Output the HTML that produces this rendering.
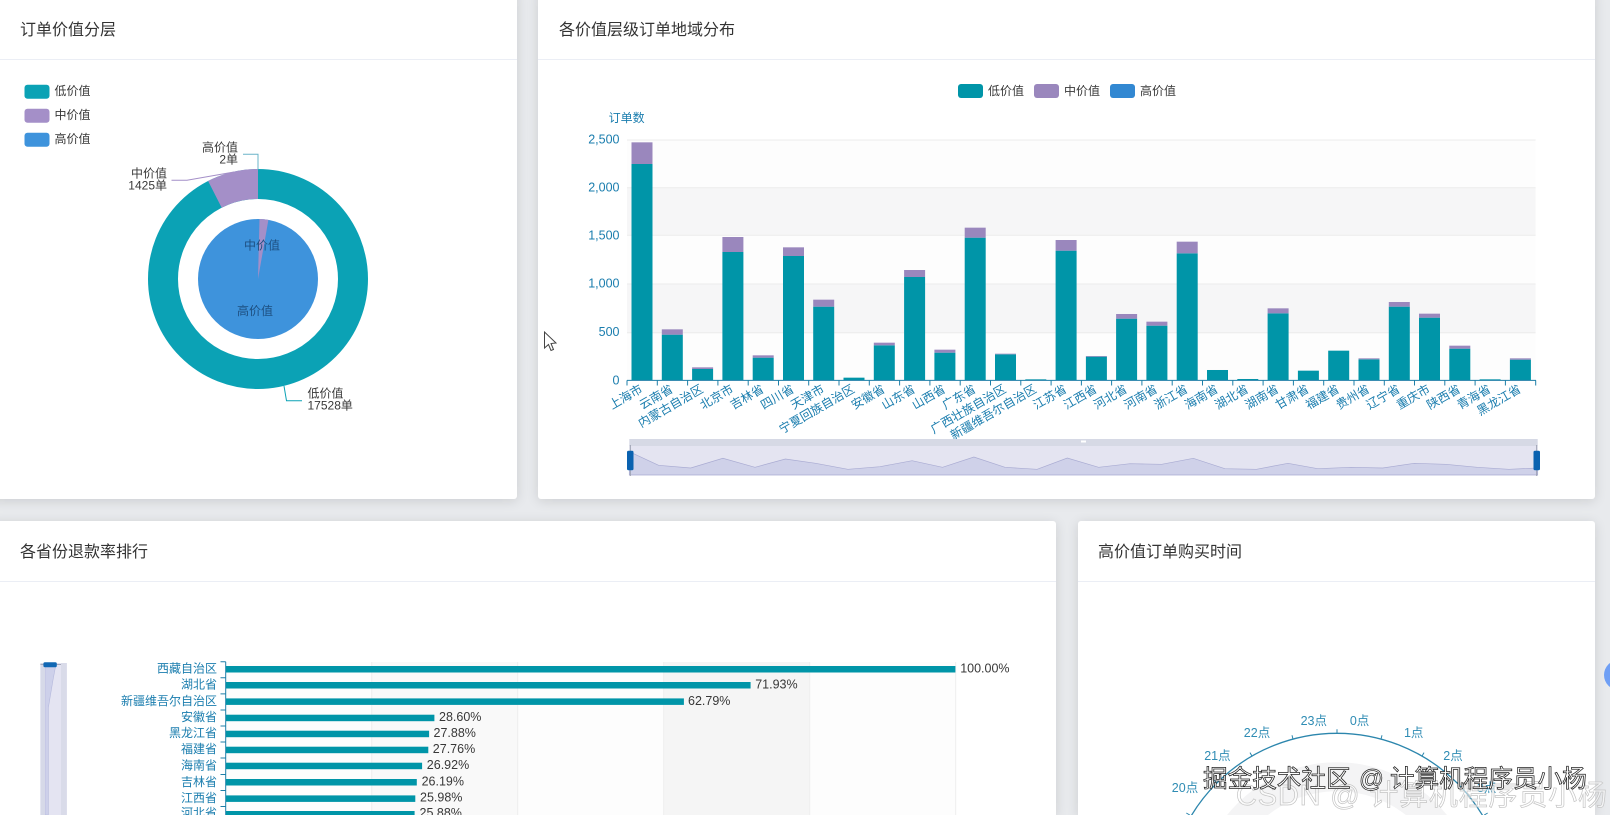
<!DOCTYPE html>
<html lang="zh">
<head>
<meta charset="utf-8">
<title>订单价值分析</title>
<style>
html,body{margin:0;padding:0;width:1610px;height:815px;overflow:hidden;background:#e8eaed;font-family:"Liberation Sans","Noto Sans CJK SC",sans-serif;}
#stage{position:relative;width:1610px;height:815px;overflow:hidden;}
.card{position:absolute;background:#fff;border-radius:3px;box-shadow:0 2px 12px rgba(0,0,0,.12);overflow:hidden;}
.card.low{border-radius:3px 3px 0 0;}
.card .hd{position:absolute;left:0;right:0;border-bottom:1px solid #ebeef5;}
.card h3{position:absolute;margin:0;font-weight:400;font-size:16px;line-height:22px;color:#333;white-space:nowrap;}
svg{position:absolute;left:0;top:0;filter:blur(.3px);}
text{font-family:"Liberation Sans","Noto Sans CJK SC",sans-serif;font-size:12px;}
.b{fill:#1a7dae;}
.d{fill:#383838;}
.n{font-size:12.5px;}
.x text{font-size:12.1px;}
</style>
</head>
<body>
<div id="stage">
<div class="card" style="left:-10px;top:-10px;width:526.5px;height:509px;"><div class="hd" style="top:0;height:69px;"></div><h3 style="left:30px;top:30px;">订单价值分层</h3></div>
<div class="card" style="left:538px;top:-10px;width:1057px;height:509px;"><div class="hd" style="top:0;height:69px;"></div><h3 style="left:21px;top:30px;">各价值层级订单地域分布</h3></div>
<div class="card low" style="left:-10px;top:521px;width:1066px;height:294px;"><div class="hd" style="top:0;height:60px;"></div><h3 style="left:30px;top:21px;">各省份退款率排行</h3></div>
<div class="card low" style="left:1078px;top:521px;width:517px;height:294px;"><div class="hd" style="top:0;height:60px;"></div><h3 style="left:20px;top:21px;">高价值订单购买时间</h3></div>

<svg width="1610" height="815" viewBox="0 0 1610 815" xmlns="http://www.w3.org/2000/svg">
<!-- donut legend -->
<rect x="24.5" y="84.7" width="25" height="14" rx="3" fill="#0ba2b5"/>
<rect x="24.5" y="108.7" width="25" height="14" rx="3" fill="#a48fc8"/>
<rect x="24.5" y="132.7" width="25" height="14" rx="3" fill="#3e93dc"/>
<text x="54.5" y="95" class="d">低价值</text>
<text x="54.5" y="119" class="d">中价值</text>
<text x="54.5" y="143" class="d">高价值</text>
<!-- donut -->
<circle cx="258" cy="279" r="95" fill="none" stroke="#0ba2b5" stroke-width="30"/>
<path d="M258 169A110 110 0 0 0 208.1 181L221.7 207.7A80 80 0 0 1 258 199Z" fill="#a48fc8"/>
<circle cx="258" cy="279" r="60" fill="#3e93dc"/>
<path d="M258 279L259.5 219A60 60 0 0 1 268.4 219.9Z" fill="#a48fc8"/>
<path d="M243 154.3H258V169.5" fill="none" stroke="#6ab4c8" stroke-width="1"/>
<path d="M171.5 180.3H187L234 172" fill="none" stroke="#a48fc8" stroke-width="1"/>
<path d="M284 386L286.5 400.7H302" fill="none" stroke="#0ba2b5" stroke-width="1"/>
<text x="238" y="151.5" text-anchor="end" class="d">高价值</text>
<text x="238" y="163.7" text-anchor="end" class="d">2单</text>
<text x="167" y="177.5" text-anchor="end" class="d">中价值</text>
<text x="167" y="189.7" text-anchor="end" class="d">1425单</text>
<text x="307.5" y="397.5" class="d">低价值</text>
<text x="307.5" y="409.7" class="d">17528单</text>
<text x="262" y="249.3" text-anchor="middle" fill="#1d4f80">中价值</text>
<text x="255" y="315" text-anchor="middle" fill="#1d4f80">高价值</text>

<!-- cursor -->
<path d="M544.5 332V348L548.5 344.5L551 350.5L553.5 349.5L551 343.5L556 343Z" fill="#fff" stroke="#444" stroke-width="1"/>

<!-- bar legend -->
<rect x="958" y="84" width="25" height="14" rx="3" fill="#0095a8"/>
<rect x="1034" y="84" width="25" height="14" rx="3" fill="#9a87bd"/>
<rect x="1110" y="84" width="25" height="14" rx="3" fill="#3288d2"/>
<text x="988" y="95" class="d">低价值</text>
<text x="1064" y="95" class="d">中价值</text>
<text x="1140" y="95" class="d">高价值</text>
<text x="608.6" y="122" class="b">订单数</text>

<!-- split area + grid -->
<rect x="627" y="140" width="908.6" height="240.4" fill="#fdfdfd"/>
<rect x="627" y="187.7" width="908.6" height="47.6" fill="#f6f6f7"/>
<rect x="627" y="284" width="908.6" height="48.7" fill="#f6f6f7"/>
<path d="M627 140H1535.6M627 187.7H1535.6M627 235.3H1535.6M627 284H1535.6M627 332.7H1535.6" stroke="#ececec" stroke-width="1" fill="none"/>
<g class="b" text-anchor="end">
<text class="n" x="619.5" y="143.5">2,500</text>
<text class="n" x="619.5" y="191.5">2,000</text>
<text class="n" x="619.5" y="239.5">1,500</text>
<text class="n" x="619.5" y="287.5">1,000</text>
<text class="n" x="619.5" y="336">500</text>
<text class="n" x="619.5" y="384.5">0</text>
</g>

<!-- bars -->
<g transform="translate(0,60) scale(1,.33333)" fill="#0095a8">
<rect x="631.5" y="312" width="21" height="649"/><rect x="661.8" y="824" width="21" height="137"/><rect x="692.1" y="927" width="21" height="34"/><rect x="722.4" y="576" width="21" height="385"/><rect x="752.7" y="893" width="21" height="68"/><rect x="783" y="588" width="21" height="373"/><rect x="813.2" y="740" width="21" height="221"/><rect x="843.5" y="953" width="21" height="8"/><rect x="873.8" y="856" width="21" height="105"/><rect x="904.1" y="651" width="21" height="310"/><rect x="934.4" y="878" width="21" height="83"/><rect x="964.7" y="533" width="21" height="428"/><rect x="995" y="883" width="21" height="78"/><rect x="1025.3" y="958" width="21" height="3"/><rect x="1055.6" y="572" width="21" height="389"/><rect x="1085.9" y="890" width="21" height="71"/><rect x="1116.1" y="776" width="21" height="185"/><rect x="1146.4" y="797" width="21" height="164"/><rect x="1176.7" y="580" width="21" height="381"/><rect x="1207" y="930" width="21" height="31"/><rect x="1237.3" y="957" width="21" height="4"/><rect x="1267.6" y="760" width="21" height="201"/><rect x="1297.9" y="932" width="21" height="29"/><rect x="1328.2" y="872" width="21" height="89"/><rect x="1358.5" y="898" width="21" height="63"/><rect x="1388.8" y="740" width="21" height="221"/><rect x="1419" y="773" width="21" height="188"/><rect x="1449.3" y="866" width="21" height="95"/><rect x="1479.6" y="958" width="21" height="3"/><rect x="1509.9" y="899" width="21" height="62"/>
</g>
<g transform="translate(0,60) scale(1,.33333)" fill="#9a87bd">
<rect x="631.5" y="247" width="21" height="65"/><rect x="661.8" y="808" width="21" height="16"/><rect x="692.1" y="922" width="21" height="5"/><rect x="722.4" y="531" width="21" height="45"/><rect x="752.7" y="886" width="21" height="7"/><rect x="783" y="562" width="21" height="26"/><rect x="813.2" y="719" width="21" height="21"/><rect x="873.8" y="848" width="21" height="8"/><rect x="904.1" y="630" width="21" height="21"/><rect x="934.4" y="869" width="21" height="9"/><rect x="964.7" y="503" width="21" height="30"/><rect x="995" y="881" width="21" height="2"/><rect x="1055.6" y="540" width="21" height="32"/><rect x="1085.9" y="888" width="21" height="2"/><rect x="1116.1" y="762" width="21" height="14"/><rect x="1146.4" y="785" width="21" height="12"/><rect x="1176.7" y="545" width="21" height="35"/><rect x="1267.6" y="745" width="21" height="15"/><rect x="1358.5" y="895" width="21" height="3"/><rect x="1388.8" y="726" width="21" height="14"/><rect x="1419" y="761" width="21" height="12"/><rect x="1449.3" y="857" width="21" height="9"/><rect x="1509.9" y="895" width="21" height="4"/>
</g>
<!-- x axis -->
<path d="M627 380.4H1536M627 380.4V385.5M657.3 380.4V385.5M687.6 380.4V385.5M717.9 380.4V385.5M748.2 380.4V385.5M778.5 380.4V385.5M808.7 380.4V385.5M839 380.4V385.5M869.3 380.4V385.5M899.6 380.4V385.5M929.9 380.4V385.5M960.2 380.4V385.5M990.5 380.4V385.5M1020.8 380.4V385.5M1051.1 380.4V385.5M1081.4 380.4V385.5M1111.6 380.4V385.5M1141.9 380.4V385.5M1172.2 380.4V385.5M1202.5 380.4V385.5M1232.8 380.4V385.5M1263.1 380.4V385.5M1293.4 380.4V385.5M1323.7 380.4V385.5M1354 380.4V385.5M1384.3 380.4V385.5M1414.5 380.4V385.5M1444.8 380.4V385.5M1475.1 380.4V385.5M1505.4 380.4V385.5M1535.7 380.4V385.5" stroke="#1e7fa8" stroke-width="1" fill="none"/>
<g class="b x" text-anchor="end">
<text transform="translate(643.5,391.5) rotate(-30)">上海市</text>
<text transform="translate(673.8,391.5) rotate(-30)">云南省</text>
<text transform="translate(704.1,391.5) rotate(-30)">内蒙古自治区</text>
<text transform="translate(734.4,391.5) rotate(-30)">北京市</text>
<text transform="translate(764.7,391.5) rotate(-30)">吉林省</text>
<text transform="translate(795,391.5) rotate(-30)">四川省</text>
<text transform="translate(825.2,391.5) rotate(-30)">天津市</text>
<text transform="translate(855.5,391.5) rotate(-30)">宁夏回族自治区</text>
<text transform="translate(885.8,391.5) rotate(-30)">安徽省</text>
<text transform="translate(916.1,391.5) rotate(-30)">山东省</text>
<text transform="translate(946.4,391.5) rotate(-30)">山西省</text>
<text transform="translate(976.7,391.5) rotate(-30)">广东省</text>
<text transform="translate(1007,391.5) rotate(-30)">广西壮族自治区</text>
<text transform="translate(1037.3,391.5) rotate(-30)">新疆维吾尔自治区</text>
<text transform="translate(1067.6,391.5) rotate(-30)">江苏省</text>
<text transform="translate(1097.9,391.5) rotate(-30)">江西省</text>
<text transform="translate(1128.1,391.5) rotate(-30)">河北省</text>
<text transform="translate(1158.4,391.5) rotate(-30)">河南省</text>
<text transform="translate(1188.7,391.5) rotate(-30)">浙江省</text>
<text transform="translate(1219,391.5) rotate(-30)">海南省</text>
<text transform="translate(1249.3,391.5) rotate(-30)">湖北省</text>
<text transform="translate(1279.6,391.5) rotate(-30)">湖南省</text>
<text transform="translate(1309.9,391.5) rotate(-30)">甘肃省</text>
<text transform="translate(1340.2,391.5) rotate(-30)">福建省</text>
<text transform="translate(1370.5,391.5) rotate(-30)">贵州省</text>
<text transform="translate(1400.8,391.5) rotate(-30)">辽宁省</text>
<text transform="translate(1431,391.5) rotate(-30)">重庆市</text>
<text transform="translate(1461.3,391.5) rotate(-30)">陕西省</text>
<text transform="translate(1491.6,391.5) rotate(-30)">青海省</text>
<text transform="translate(1521.9,391.5) rotate(-30)">黑龙江省</text>
</g>
<!-- slider -->
<rect x="629.3" y="439" width="908.4" height="7" fill="#d6d9e5"/>
<rect x="629.3" y="446" width="908.4" height="29" fill="#e4e4f1"/>
<polygon fill="#cfd1e9" stroke="#a9abd2" stroke-width=".7" points="629.3,451.7 658.6,465.3 690.7,468 722.9,458.3 755,467.3 785.4,459 815.7,463.3 847.9,469.3 880,466.7 912.1,460.7 942.5,467.3 973.9,457 1005,467.3 1037.1,469.3 1067.3,458 1098.6,467.3 1130,463.7 1161.7,464.3 1193.3,458.3 1224.9,468.7 1256.4,469.3 1288,463.3 1317.8,468.7 1351,467.3 1382.7,468 1414.3,463.3 1445.8,464.3 1477.4,467.3 1509,469.3 1537.7,468 1537.7,475 629.3,475"/>
<rect x="1081" y="440.5" width="5" height="2" fill="#fff"/>
<path d="M630.3 445V476M1536.7 445V476" stroke="#9a9eb0" stroke-width="1"/>
<rect x="627" y="450.7" width="6.5" height="19.5" rx="1.5" fill="#0a62b0"/>
<rect x="1533.5" y="450.7" width="6.5" height="19.5" rx="1.5" fill="#0a62b0"/>

<!-- refund chart -->
<rect x="225.7" y="662" width="146" height="153" fill="#fdfdfd"/>
<rect x="371.7" y="662" width="146" height="153" fill="#f9f9f9"/>
<rect x="517.7" y="662" width="146" height="153" fill="#fdfdfd"/>
<rect x="663.7" y="662" width="146" height="153" fill="#f5f5f5"/>
<rect x="809.7" y="662" width="146" height="153" fill="#fdfdfd"/>
<path d="M371.7 662V815M517.7 662V815M663.7 662V815M809.7 662V815M955.7 662V815" stroke="#eeeeee" stroke-width="1" fill="none"/>
<rect x="40.4" y="663" width="26.4" height="152" fill="#e4e4f2"/>
<polygon points="45,664 56,664 53,680 48.3,708 48.3,815 45,815" fill="#cdd0ea" stroke="#b4b8dc" stroke-width=".6"/>
<rect x="40.4" y="663" width="4.6" height="152" fill="#d6d9e8"/>
<rect x="61" y="663" width="5.8" height="152" fill="#d9dbe9"/>
<path d="M40.4 664.5H61" stroke="#a3a8ba" stroke-width="1"/>
<rect x="43.4" y="662.3" width="13.4" height="5" rx="1.5" fill="#1268b4"/>
<path d="M225.7 661.7V815M220.5 661.7H225.7M220.5 677.8H225.7M220.5 693.9H225.7M220.5 710H225.7M220.5 726H225.7M220.5 742H225.7M220.5 758H225.7M220.5 774.5H225.7M220.5 790.5H225.7M220.5 806.5H225.7" stroke="#1e7fa8" stroke-width="1" fill="none"/>
<g fill="#0095a8">
<rect x="226" y="666" width="729.4" height="6.5"/>
<rect x="226" y="682" width="524.6" height="6.5"/>
<rect x="226" y="698.4" width="457.9" height="6.5"/>
<rect x="226" y="714.7" width="208.4" height="6.5"/>
<rect x="226" y="730.7" width="203.1" height="6.5"/>
<rect x="226" y="746.7" width="202.3" height="6.5"/>
<rect x="226" y="762.7" width="196.1" height="6.5"/>
<rect x="226" y="779" width="190.8" height="6.5"/>
<rect x="226" y="795.4" width="189.3" height="6.5"/>
<rect x="226" y="811" width="188.6" height="4"/>
</g>
<g class="b" text-anchor="end">
<text x="217" y="672.4">西藏自治区</text>
<text x="217" y="688.4">湖北省</text>
<text x="217" y="705.2">新疆维吾尔自治区</text>
<text x="217" y="721.2">安徽省</text>
<text x="217" y="737.2">黑龙江省</text>
<text x="217" y="753.2">福建省</text>
<text x="217" y="769.4">海南省</text>
<text x="217" y="786.2">吉林省</text>
<text x="217" y="801.8">江西省</text>
<text x="217" y="817">河北省</text>
</g>
<g class="d">
<text class="n" x="960.2" y="672.6">100.00%</text>
<text class="n" x="755.2" y="688.4">71.93%</text>
<text class="n" x="688" y="705">62.79%</text>
<text class="n" x="439" y="721.1">28.60%</text>
<text class="n" x="433.5" y="737.1">27.88%</text>
<text class="n" x="432.8" y="753.1">27.76%</text>
<text class="n" x="426.8" y="769.1">26.92%</text>
<text class="n" x="421.6" y="785.6">26.19%</text>
<text class="n" x="420" y="801.6">25.98%</text>
<text class="n" x="419.5" y="817">25.88%</text>
</g>

<!-- radial chart -->
<circle cx="1337" cy="903.3" r="126.5" fill="none" stroke="#f4f4f5" stroke-width="29"/>
<circle cx="1337" cy="903.3" r="170" fill="none" stroke="#2c86ad" stroke-width="1.3"/>
<path d="M1337 733.3V729.3M1381 739.1L1382 735.2M1293 739.1L1292 735.2M1422 756.1L1424 752.6M1252 756.1L1250 752.6M1457.2 783.1L1460 780.3M1216.8 783.1L1214 780.3M1484.2 815L1487.7 813M1189.8 815L1186.3 813" stroke="#2c86ad" stroke-width="1" fill="none"/>
<g fill="#2f8cb4" text-anchor="middle">
<text class="n" x="1313.8" y="725">23点</text>
<text class="n" x="1359.6" y="725">0点</text>
<text class="n" x="1257" y="737">22点</text>
<text class="n" x="1413.7" y="737">1点</text>
<text class="n" x="1217.4" y="760">21点</text>
<text class="n" x="1453" y="760">2点</text>
<text class="n" x="1185" y="792">20点</text>
<text class="n" x="1486.7" y="792">3点</text>
</g>

<!-- side blue dot -->
<circle cx="1619" cy="675" r="15" fill="#6f9ff5"/>

<!-- watermarks -->
<text x="1236" y="805" fill="rgba(255,255,255,.5)" stroke="#c4c4c4" stroke-width=".7" style="font-size:29px;letter-spacing:.8px">CSDN @ 计算机程序员小杨</text>
<text x="1203" y="787" fill="#fff" stroke="#222" stroke-width=".75" style="font-size:24.6px">掘金技术社区</text>
<text x="1359" y="787" fill="#fff" stroke="#222" stroke-width=".7" style="font-size:24.6px;">@</text>
<text x="1390" y="787" fill="#fff" stroke="#222" stroke-width=".75" style="font-size:24.6px">计算机程序员小杨</text>
</svg>
</div>
</body>
</html>
